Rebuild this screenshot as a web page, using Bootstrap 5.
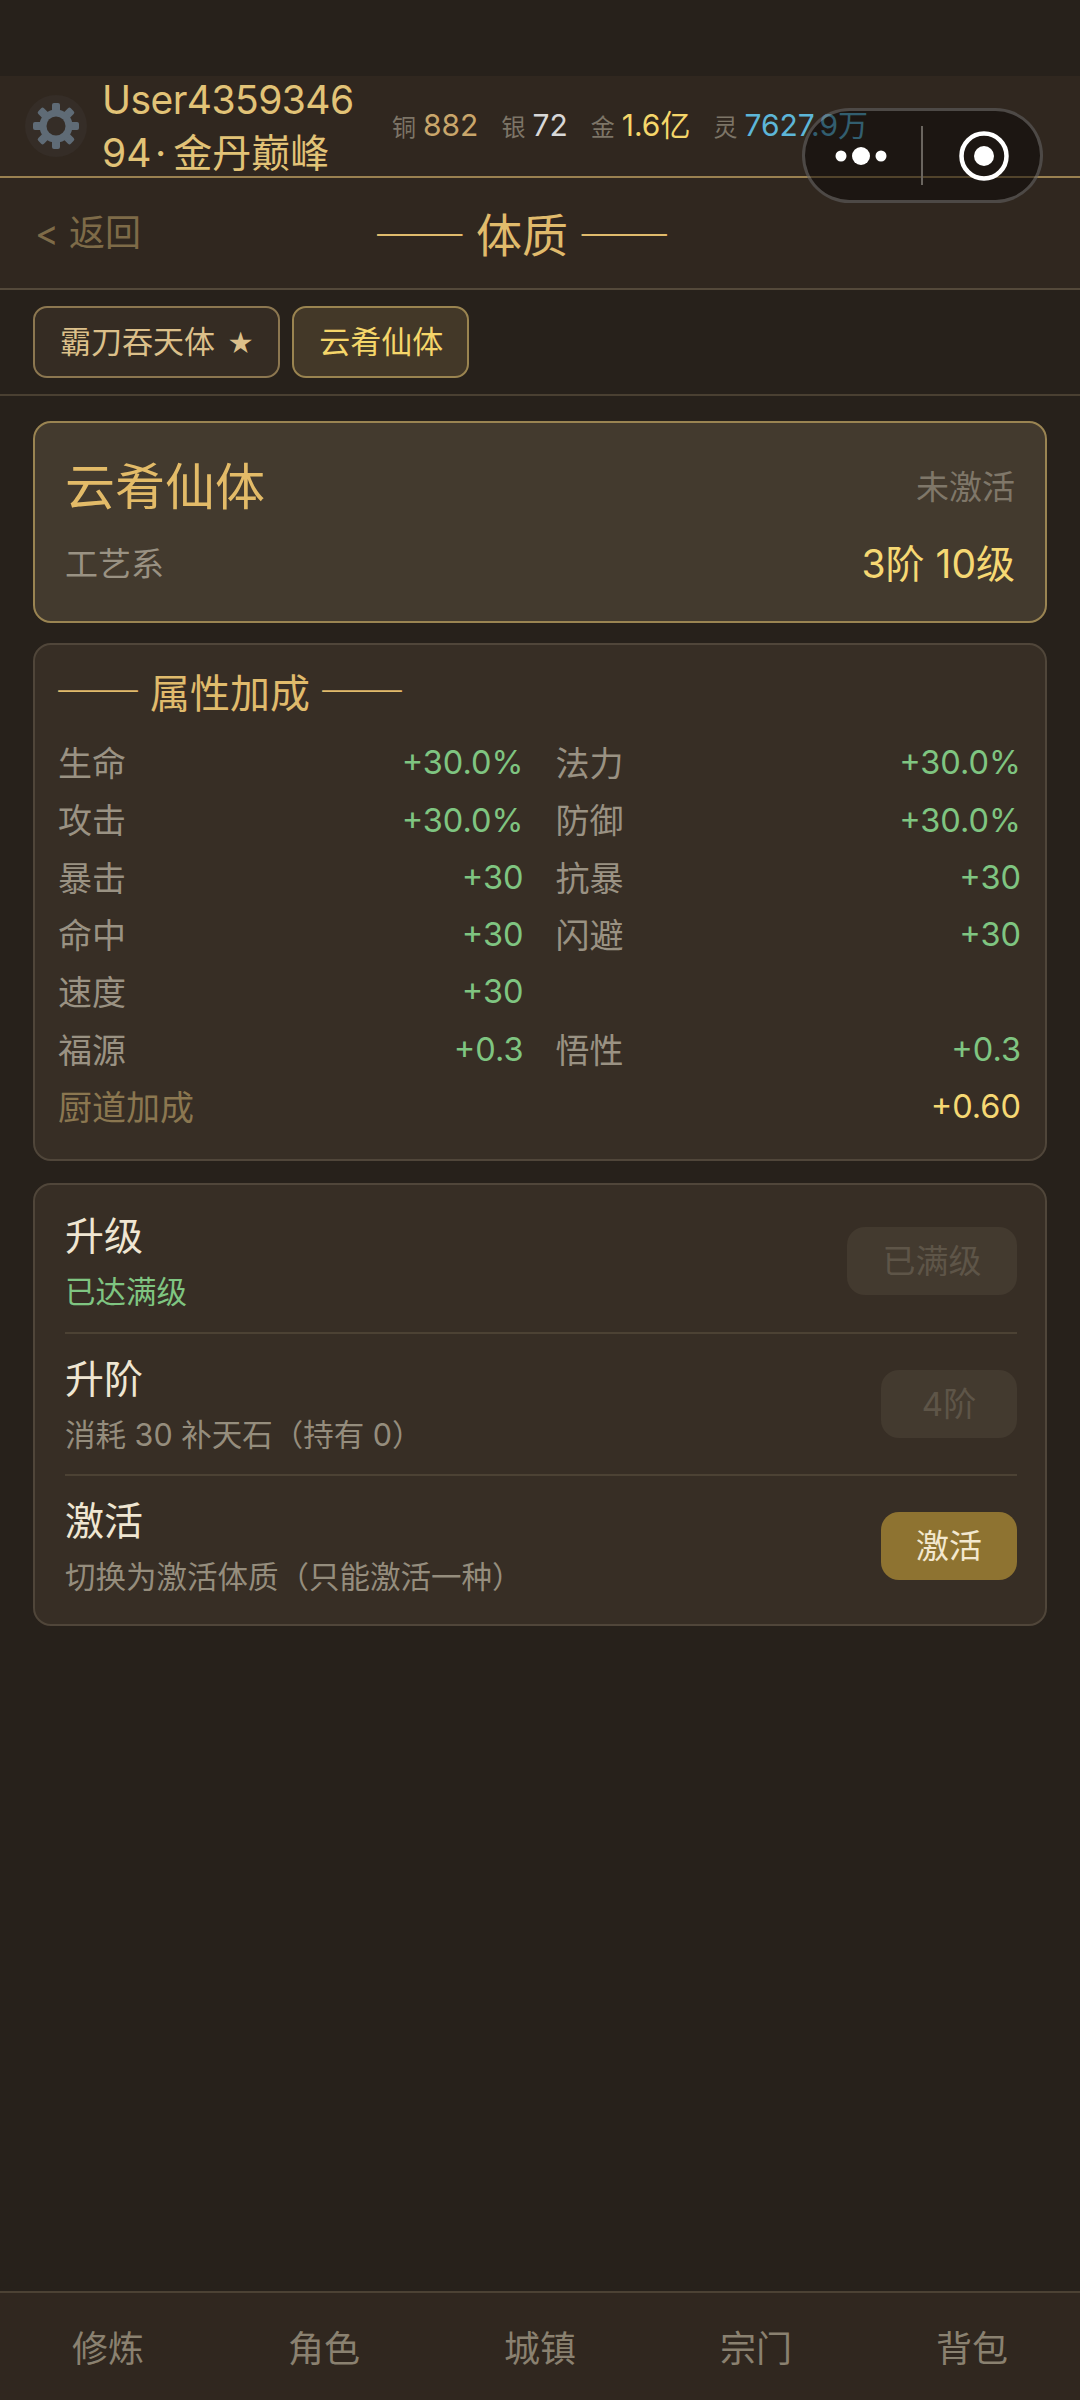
<!DOCTYPE html>
<html lang="zh-CN">
<head>
  <meta charset="UTF-8">
  <meta name="viewport" content="width=device-width, initial-scale=1.0">
  <title>体质</title>
  <link href="https://cdn.jsdelivr.net/npm/bootstrap@5.3.2/dist/css/bootstrap.min.css" rel="stylesheet">
  <style>
    body {
      font-family: "Inter", "Noto Sans CJK SC", sans-serif;
      font-weight: 400;
      background-color: #27211b;
      color: #e0e0e0;
      height: 100vh;
      overflow: hidden;
      position: relative;
    }

    .status-gap { height: 76px; }

    .top-bar {
      height: 102px;
      padding-left: 25px;
      background-color: #30271f;
      border-bottom: 2px solid #9a8150;
    }

    .gear-wrap {
      width: 62px;
      height: 62px;
      border-radius: 50%;
      background-color: #352d27;
      flex-shrink: 0;
    }

    .user-box {
      margin-left: 15px;
      width: 290px;
      color: #e2c377;
      font-size: 39px;
      line-height: 53px;
      flex-shrink: 0;
    }

    .user-id { letter-spacing: -0.55px; }

    .coin-list { font-size: 30px; line-height: 42px; }
    .coin-item { margin-right: 23px; white-space: nowrap; }
    .coin-item em { font-style: normal; font-size: 24px; color: #7d7567; margin-right: 7px; }
    .c-copper { color: #c9a66b; }
    .c-silver { color: #d8d8d8; }
    .c-gold { color: #f5d66a; }
    .c-spirit { color: #5db6d8; }

    .title-bar {
      height: 112px;
      padding-right: 36px;
      background-color: #30271f;
      border-bottom: 2px solid #54493a;
    }

    .back-link {
      left: 35px;
      top: 50%;
      transform: translateY(-50%);
      color: #7e6b48;
      font-size: 36px;
      text-decoration: none;
    }

    .page-title {
      font-family: "Noto Sans CJK SC", sans-serif;
      color: #e0bb6c;
      font-size: 46px;
      line-height: 60px;
      margin-top: -3px;
    }

    .tab-bar {
      height: 106px;
      padding: 16px 33px 0;
      gap: 12px;
      border-bottom: 2px solid #4a4032;
    }

    .phys-tab {
      height: 72px;
      padding: 0 24px 0 25px;
      font-size: 31px;
      line-height: 68px;
      color: #dcc08a;
      background-color: #352c23;
      border: 2px solid #8c7750;
      border-radius: 14px;
    }

    .phys-tab.is-on { color: #f5d66a; background-color: #433828; border-color: #9a8450; }
    .tab-star { font-size: 26px; margin-left: 12px; }

    .panel-wrap { padding: 25px 33px 0; }

    .phys-card {
      background-color: #372e25;
      border: 2px solid #50463a;
      border-radius: 18px;
      color: #e0e0e0;
    }

    .head-card {
      height: 202px;
      padding: 29px 30px 0;
      margin-bottom: 20px;
      background-color: #433a2e;
      border-color: #9a8452;
    }

    .head-name { color: #e3bb68; font-size: 50px; line-height: 70px; }
    .head-state { color: #7f7769; font-size: 33px; line-height: 70px; }
    .head-line { margin-top: 17px; line-height: 50px; }
    .head-type { color: #9a9283; font-size: 33px; }
    .head-level { color: #f6d873; font-size: 39px; }

    .attr-card { height: 518px; padding: 14px 24px 0 23px; margin-bottom: 22px; }
    .attr-title {
      font-family: "Noto Sans CJK SC", sans-serif;
      color: #e0bb6c;
      font-size: 40px;
      line-height: 60px;
      margin-bottom: 14px;
    }
    .attr-dash { font-size: 43px; }
    .attr-dash.is-first { margin-left: -3px; }
    .attr-row { height: 57.3px; font-size: 34px; }
    .attr-name { color: #9a9283; }
    .attr-val { color: #7fc581; font-size: 32.5px; }
    .attr-cook { color: #8b7750; }
    .attr-cook-val { color: #f6d873; font-size: 32.5px; }

    .act-card { height: 443px; padding: 5px 28px 0 30px; }
    .act-row { height: 142px; }
    .act-row + .act-row { border-top: 2px solid #4c4234; }
    .act-text { padding-top: 5px; }
    .act-name { color: #efe6d2; font-size: 39px; line-height: 56px; }
    .act-note { color: #958d7d; font-size: 30.5px; line-height: 56px; }
    .act-note.is-done { color: #7fc581; }

    .act-btn {
      height: 68px;
      padding: 0;
      font-size: 33px;
      line-height: 68px;
      border: none;
      border-radius: 18px;
    }

    .act-btn.btn-wide { width: 170px; }
    .act-btn.btn-short { width: 136px; }
    .act-btn:disabled { color: #5e5548; background-color: #433a2f; opacity: 1; }
    .act-btn.is-live { color: #f3e8cf; background-color: #8e7331; }

    .bottom-tabs {
      height: 109px;
      padding-top: 4px;
      background-color: #30271f;
      border-top: 2px solid #4c4234;
    }

    .bottom-tabs a {
      color: #8a8170;
      font-size: 36px;
      text-decoration: none;
    }

    .mini-capsule {
      left: 802px;
      top: 108px;
      width: 241px;
      height: 95px;
      background-color: rgba(8, 6, 5, 0.5);
      border: 3px solid rgba(255, 255, 255, 0.22);
      border-radius: 48px;
    }
  </style>
</head>
<body class="d-flex flex-column">

  <div class="status-gap"></div>

  <div class="top-bar d-flex align-items-center">
    <div class="gear-wrap d-flex align-items-center justify-content-center">
      <svg width="46" height="46" viewBox="0 0 46 46">
        <g fill="#5f6b76">
          <rect x="19" y="0" width="8" height="46" rx="2"/>
          <rect x="19" y="0" width="8" height="46" rx="2" transform="rotate(45 23 23)"/>
          <rect x="19" y="0" width="8" height="46" rx="2" transform="rotate(90 23 23)"/>
          <rect x="19" y="0" width="8" height="46" rx="2" transform="rotate(135 23 23)"/>
        </g>
        <circle cx="23" cy="23" r="13" fill="none" stroke="#5f6b76" stroke-width="7"/>
        <circle cx="23" cy="23" r="9.5" fill="#352d27"/>
      </svg>
    </div>
    <div class="user-box">
      <div class="user-id">User4359346</div>
      <div>94&#8202;·&thinsp;金丹巅峰</div>
    </div>
    <div class="coin-list d-flex align-items-center">
      <span class="coin-item c-copper"><em>铜</em>882</span>
      <span class="coin-item c-silver"><em>银</em>72</span>
      <span class="coin-item c-gold"><em>金</em>1.6亿</span>
      <span class="coin-item c-spirit"><em>灵</em>7627.9万</span>
    </div>
  </div>

  <div class="title-bar position-relative d-flex align-items-center justify-content-center">
    <a href="#" class="back-link position-absolute">&lt; 返回</a>
    <div class="page-title">—— 体质 ——</div>
  </div>

  <div class="tab-bar d-flex">
    <div class="phys-tab">霸刀吞天体<span class="tab-star">★</span></div>
    <div class="phys-tab is-on">云肴仙体</div>
  </div>

  <div class="panel-wrap">
    <div class="phys-card head-card card">
      <div class="d-flex justify-content-between align-items-center">
        <span class="head-name">云肴仙体</span>
        <span class="head-state">未激活</span>
      </div>
      <div class="head-line d-flex justify-content-between align-items-center">
        <span class="head-type">工艺系</span>
        <span class="head-level">3阶 10级</span>
      </div>
    </div>

    <div class="phys-card attr-card card">
      <div class="attr-title"><span class="attr-dash is-first">——</span> 属性加成 <span class="attr-dash">——</span></div>
      <div class="row gx-0">
        <div class="col-6 pe-3"><div class="attr-row d-flex justify-content-between align-items-center"><span class="attr-name">生命</span><span class="attr-val">+30.0%</span></div></div>
        <div class="col-6 ps-3"><div class="attr-row d-flex justify-content-between align-items-center"><span class="attr-name">法力</span><span class="attr-val">+30.0%</span></div></div>
        <div class="col-6 pe-3"><div class="attr-row d-flex justify-content-between align-items-center"><span class="attr-name">攻击</span><span class="attr-val">+30.0%</span></div></div>
        <div class="col-6 ps-3"><div class="attr-row d-flex justify-content-between align-items-center"><span class="attr-name">防御</span><span class="attr-val">+30.0%</span></div></div>
        <div class="col-6 pe-3"><div class="attr-row d-flex justify-content-between align-items-center"><span class="attr-name">暴击</span><span class="attr-val">+30</span></div></div>
        <div class="col-6 ps-3"><div class="attr-row d-flex justify-content-between align-items-center"><span class="attr-name">抗暴</span><span class="attr-val">+30</span></div></div>
        <div class="col-6 pe-3"><div class="attr-row d-flex justify-content-between align-items-center"><span class="attr-name">命中</span><span class="attr-val">+30</span></div></div>
        <div class="col-6 ps-3"><div class="attr-row d-flex justify-content-between align-items-center"><span class="attr-name">闪避</span><span class="attr-val">+30</span></div></div>
        <div class="col-6 pe-3"><div class="attr-row d-flex justify-content-between align-items-center"><span class="attr-name">速度</span><span class="attr-val">+30</span></div></div>
        <div class="col-6 ps-3"></div>
        <div class="col-6 pe-3"><div class="attr-row d-flex justify-content-between align-items-center"><span class="attr-name">福源</span><span class="attr-val">+0.3</span></div></div>
        <div class="col-6 ps-3"><div class="attr-row d-flex justify-content-between align-items-center"><span class="attr-name">悟性</span><span class="attr-val">+0.3</span></div></div>
        <div class="col-12"><div class="attr-row d-flex justify-content-between align-items-center"><span class="attr-cook">厨道加成</span><span class="attr-cook-val">+0.60</span></div></div>
      </div>
    </div>

    <div class="phys-card act-card card">
      <div class="act-row d-flex justify-content-between align-items-center">
        <div class="act-text">
          <div class="act-name">升级</div>
          <div class="act-note is-done">已达满级</div>
        </div>
        <button class="btn act-btn btn-wide" disabled>已满级</button>
      </div>
      <div class="act-row d-flex justify-content-between align-items-center">
        <div class="act-text">
          <div class="act-name">升阶</div>
          <div class="act-note">消耗 30 补天石（持有 0）</div>
        </div>
        <button class="btn act-btn btn-short" disabled>4阶</button>
      </div>
      <div class="act-row d-flex justify-content-between align-items-center">
        <div class="act-text">
          <div class="act-name">激活</div>
          <div class="act-note">切换为激活体质（只能激活一种）</div>
        </div>
        <button class="btn act-btn btn-short is-live">激活</button>
      </div>
    </div>
  </div>

  <div class="bottom-tabs row gx-0 mt-auto text-center align-items-center">
    <a href="#" class="col">修炼</a>
    <a href="#" class="col">角色</a>
    <a href="#" class="col">城镇</a>
    <a href="#" class="col">宗门</a>
    <a href="#" class="col">背包</a>
  </div>

  <!-- 小程序胶囊按钮，盖在内容上 -->
  <div class="mini-capsule position-absolute">
    <svg width="235" height="89" viewBox="0 0 235 89" class="d-block">
      <circle cx="36" cy="45" r="5.5" fill="#fff"/>
      <circle cx="56" cy="45" r="9" fill="#fff"/>
      <circle cx="76" cy="45" r="5.5" fill="#fff"/>
      <rect x="116" y="15" width="2" height="59" fill="#6a655f"/>
      <circle cx="179" cy="45" r="22.5" fill="none" stroke="#fff" stroke-width="4.5"/>
      <circle cx="179" cy="45" r="10" fill="#fff"/>
    </svg>
  </div>

  <script src="https://cdn.jsdelivr.net/npm/bootstrap@5.3.2/dist/js/bootstrap.bundle.min.js"></script>
</body>
</html>
